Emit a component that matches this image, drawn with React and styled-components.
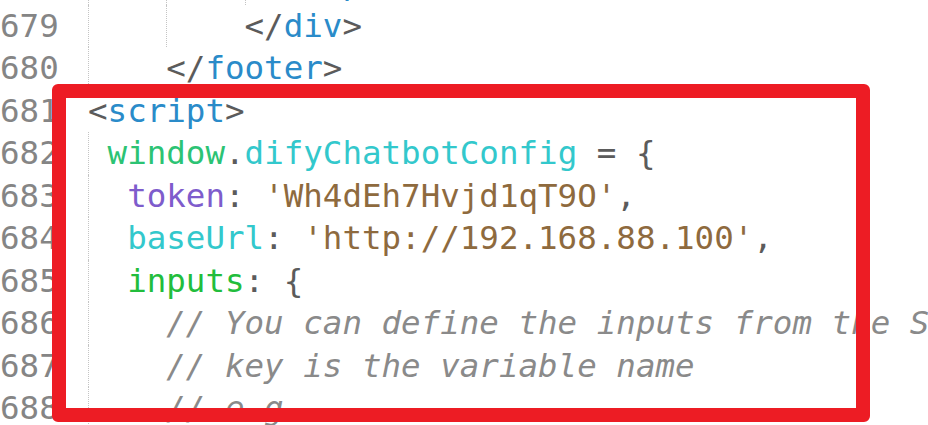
import styled, { createGlobalStyle } from 'styled-components'

const GlobalStyle = createGlobalStyle`
  html, body {
    margin: 0;
    padding: 0;
    background: #ffffff;
  }
  body {
    overflow: hidden;
  }
`

const Editor = styled.div`
  position: relative;
  width: 928px;
  height: 425px;
  overflow: hidden;
  background: #ffffff;
  font-family: 'DejaVu Sans Mono', 'Liberation Mono', monospace;
  font-size: 32.5px;
  line-height: 42.5px;
`

const Lines = styled.div`
  display: flex;
  flex-direction: column;
  margin-top: -38px;
`

const Row = styled.div`
  display: flex;
  align-items: stretch;
  height: 42.5px;
  white-space: pre;
`

const LineNo = styled.div`
  width: 55px;
  flex: none;
  text-align: right;
  color: #858585;
`

const CodeCell = styled.div`
  position: relative;
  margin-left: 33px;
  flex: 1;
`

const Guide = styled.span`
  position: absolute;
  top: 0;
  bottom: 0;
  width: 0;
  border-left: 1px dotted #c4c4c4;
`

const Tok = styled.span`
  color: ${({ $c }) => $c};
  font-style: ${({ $i }) => ($i ? 'italic' : 'normal')};
`

const Highlight = styled.div`
  position: absolute;
  left: 52px;
  top: 84px;
  width: 818px;
  height: 338px;
  box-sizing: border-box;
  border: 14px solid #ed1c24;
  border-radius: 6px;
  pointer-events: none;
`

const C = {
  punct: '#5b5b5b',
  tag: '#2a8bc9',
  win: '#2cc374',
  prop: '#33c8cc',
  key: '#7e5ccc',
  str: '#8e6a3e',
  green: '#22bd3c',
  comment: '#8a8a8a',
  orange: '#f0542c',
}

const lines = [
  {
    n: 678,
    guides: [0, 4, 8],
    toks: [
      ['        ', C.punct],
      ['<', C.punct],
      ['div', C.tag],
      ['>', C.punct],
      ['phone', C.tag],
      ['))', C.orange],
      [',', C.punct],
    ],
  },
  {
    n: 679,
    guides: [0, 4],
    toks: [
      ['        ', C.punct],
      ['</', C.punct],
      ['div', C.tag],
      ['>', C.punct],
    ],
  },
  {
    n: 680,
    guides: [0],
    toks: [
      ['    ', C.punct],
      ['</', C.punct],
      ['footer', C.tag],
      ['>', C.punct],
    ],
  },
  {
    n: 681,
    guides: [],
    toks: [
      ['<', C.punct],
      ['script', C.tag],
      ['>', C.punct],
    ],
  },
  {
    n: 682,
    guides: [0],
    toks: [
      [' ', C.punct],
      ['window', C.win],
      ['.', C.punct],
      ['difyChatbotConfig', C.prop],
      [' = {', C.punct],
    ],
  },
  {
    n: 683,
    guides: [0],
    toks: [
      ['  ', C.punct],
      ['token', C.key],
      [': ', C.punct],
      ["'Wh4dEh7Hvjd1qT9O'", C.str],
      [',', C.punct],
    ],
  },
  {
    n: 684,
    guides: [0],
    toks: [
      ['  ', C.punct],
      ['baseUrl', C.prop],
      [': ', C.punct],
      ["'http://192.168.88.100'", C.str],
      [',', C.punct],
    ],
  },
  {
    n: 685,
    guides: [0],
    toks: [
      ['  ', C.punct],
      ['inputs', C.green],
      [': {', C.punct],
    ],
  },
  {
    n: 686,
    guides: [0],
    toks: [
      ['    ', C.punct],
      ['// You can define the inputs from the Start node.', C.comment, true],
    ],
  },
  {
    n: 687,
    guides: [0],
    toks: [
      ['    ', C.punct],
      ['// key is the variable name', C.comment, true],
    ],
  },
  {
    n: 688,
    guides: [0],
    toks: [
      ['    ', C.punct],
      ['// e.g.', C.comment, true],
    ],
  },
]

export default function App() {
  return (
    <>
      <GlobalStyle />
      <Editor>
        <Lines>
          {lines.map((line) => (
            <Row key={line.n}>
              <LineNo>{line.n}</LineNo>
              <CodeCell>
                {line.guides.map((g) => (
                  <Guide key={g} style={{ left: `${g}ch` }} />
                ))}
                {line.toks.map(([text, color, italic], i) => (
                  <Tok key={i} $c={color} $i={italic}>
                    {text}
                  </Tok>
                ))}
              </CodeCell>
            </Row>
          ))}
        </Lines>
        <Highlight />
      </Editor>
    </>
  )
}
